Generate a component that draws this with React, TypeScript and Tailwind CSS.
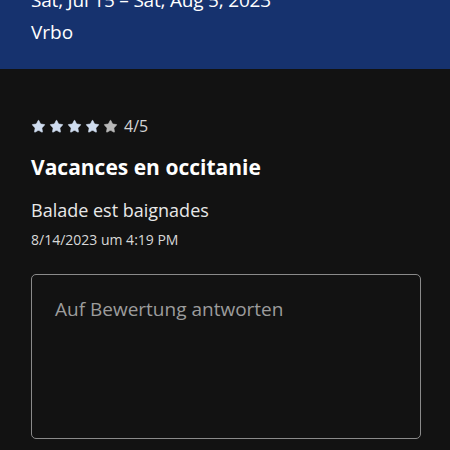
import { Star } from 'lucide-react'

export default function App() {
  const rating = 4
  return (
    <main className="w-[450px] h-[450px] overflow-hidden bg-[#121212] font-['Open_Sans',sans-serif]">
      <header className="flex flex-col bg-[#16326e] h-[69px] px-[31px]">
        <p className="text-white text-[19px] leading-[24px] -mt-[12px] tracking-[-0.2px]">Sat, Jul 15 – Sat, Aug 5, 2023</p>
        <p className="text-white text-[19px] leading-[24px] mt-[8px]">Vrbo</p>
      </header>

      <section className="px-[31px] pt-[48px]">
        <div className="flex items-center gap-[3px] h-[18px]">
          {[1, 2, 3, 4, 5].map(i => (
            <Star
              key={i}
              className={i <= rating ? 'w-[15px] h-[15px] fill-[#cfdcef] text-[#cfdcef]' : 'w-[15px] h-[15px] fill-[#b8b8b8] text-[#b8b8b8]'}
              strokeWidth={1}
            />
          ))}
          <span className="text-[#d4d4d4] text-[16px] ml-[3px]">4/5</span>
        </div>

        <h2 className="text-white font-bold text-[21px] leading-[28px] mt-[18px]">Vacances en occitanie</h2>
        <p className="text-[#e8e8e8] text-[18px] leading-[24px] mt-[17px]">Balade est baignades</p>
        <p className="text-[#d8d8d8] text-[14px] leading-[20px] mt-[8px]">8/14/2023 um 4:19 PM</p>

        <div className="mt-[24px] w-[390px] h-[165px] border border-[#8a8a8a] rounded-[5px] px-[23px] pt-[22px]">
          <p className="text-[#9c9c9c] text-[19px] leading-[24px]">Auf Bewertung antworten</p>
        </div>
      </section>
    </main>
  )
}
